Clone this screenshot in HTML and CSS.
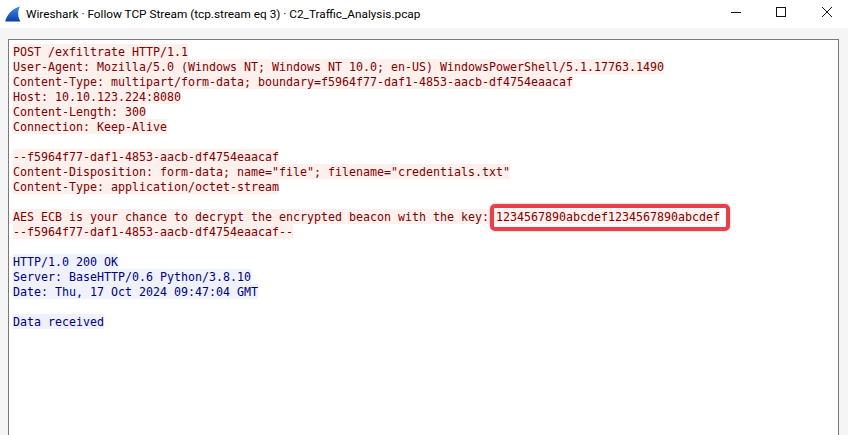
FILE: index.html
```html
<!DOCTYPE html>
<html lang="en">
<head>
<meta charset="utf-8">
<title>Wireshark · Follow TCP Stream</title>
<link rel="stylesheet" href="styles.css">
</head>
<body>
<div class="window">
  <header class="titlebar">
    <svg class="app-icon" width="16" height="16" viewBox="0 0 16 16">
      <defs>
        <linearGradient id="fin" x1="0" y1="0" x2="0" y2="1">
          <stop offset="0" stop-color="#3f8fe6"/>
          <stop offset="1" stop-color="#0a3fa8"/>
        </linearGradient>
      </defs>
      <path d="M0.2 15.5C1.8 9 7 2.5 15 0.5C12.5 5 12.5 11 15.6 15.5Z" fill="url(#fin)"/>
    </svg>
    <span class="title">Wireshark · Follow TCP Stream (tcp.stream eq 3) · C2_Traffic_Analysis.pcap</span>
    <div class="controls">
      <svg class="ctl" width="46" height="28" viewBox="0 0 46 28"><path d="M21 12.5H31" stroke="#111" fill="none"/></svg>
      <svg class="ctl" width="46" height="28" viewBox="0 0 46 28"><rect x="20.5" y="7.5" width="9" height="9" stroke="#111" fill="none"/></svg>
      <svg class="ctl" width="46" height="28" viewBox="0 0 46 28"><path d="M20 7L30 17M30 7L20 17" stroke="#111" fill="none"/></svg>
    </div>
  </header>
  <main class="content">
    <div class="stream">
      <div class="line client"><span>POST /exfiltrate HTTP/1.1</span></div>
      <div class="line client"><span>User-Agent: Mozilla/5.0 (Windows NT; Windows NT 10.0; en-US) WindowsPowerShell/5.1.17763.1490</span></div>
      <div class="line client"><span>Content-Type: multipart/form-data; boundary=f5964f77-daf1-4853-aacb-df4754eaacaf</span></div>
      <div class="line client"><span>Host: 10.10.123.224:8080</span></div>
      <div class="line client"><span>Content-Length: 300</span></div>
      <div class="line client"><span>Connection: Keep-Alive</span></div>
      <div class="line"></div>
      <div class="line client"><span>--f5964f77-daf1-4853-aacb-df4754eaacaf</span></div>
      <div class="line client"><span>Content-Disposition: form-data; name="file"; filename="credentials.txt"</span></div>
      <div class="line client"><span>Content-Type: application/octet-stream</span></div>
      <div class="line"></div>
      <div class="line client"><span>AES ECB is your chance to decrypt the encrypted beacon with the key: </span><span>1234567890abcdef1234567890abcdef</span></div>
      <div class="line client"><span>--f5964f77-daf1-4853-aacb-df4754eaacaf--</span></div>
      <div class="line"></div>
      <div class="line server"><span>HTTP/1.0 200 OK</span></div>
      <div class="line server"><span>Server: BaseHTTP/0.6 Python/3.8.10</span></div>
      <div class="line server"><span>Date: Thu, 17 Oct 2024 09:47:04 GMT</span></div>
      <div class="line"></div>
      <div class="line server"><span>Data received</span></div>
    </div>
    <div class="callout"></div>
  </main>
</div>
</body>
</html>
```

FILE: styles.css
```css
html, body {
  margin: 0;
  padding: 0;
  height: 100%;
  overflow: hidden;
  background: #f5f5f5;
}
.window {
  display: flex;
  flex-direction: column;
  height: 435px;
  width: 848px;
  overflow: hidden;
}
.titlebar {
  display: flex;
  align-items: center;
  flex: 0 0 28px;
  height: 28px;
  background: #fff;
  padding-left: 5px;
  box-sizing: border-box;
}
.app-icon {
  flex: none;
  margin-right: 5px;
}
.title {
  font: 11.8px/28px Roboto, "Noto Sans", sans-serif;
  color: #000;
  white-space: nowrap;
}
.controls {
  display: flex;
  margin-left: auto;
}
.ctl {
  display: block;
}
.content {
  position: relative;
  flex: 1;
  padding: 11px 9px 0 8px;
}
.stream {
  box-sizing: border-box;
  height: 420px;
  background: #fff;
  border: 1px solid #7a7a7a;
  padding: 4px 4px 0;
  font: 11.63px/15px "DejaVu Sans Mono", "Liberation Mono", monospace;
}
.line {
  display: flex;
  height: 15px;
}
.line span {
  display: block;
  box-sizing: border-box;
  height: 15px;
  padding-top: 1px;
  white-space: pre;
}
.client { color: #7f0000; }
.client span { background: #fdf0ed; }
.server { color: #00007f; }
.server span { background: #eff2fd; }
.callout {
  position: absolute;
  left: 490px;
  top: 176px;
  width: 232px;
  height: 19px;
  border: 4px solid #e8404a;
  border-radius: 5px;
  box-shadow: 0 0 2px rgba(90, 90, 90, .6);
}
```
